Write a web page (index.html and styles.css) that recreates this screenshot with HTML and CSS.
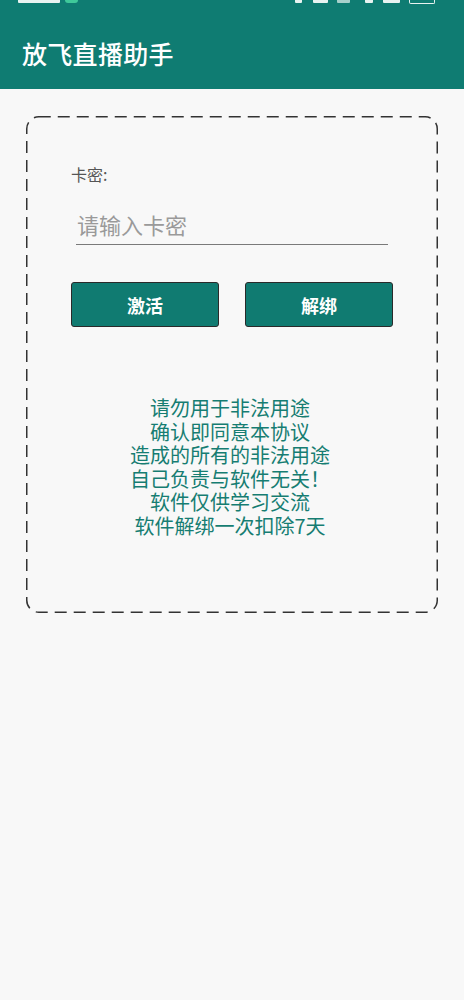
FILE: index.html
```html
<!DOCTYPE html>
<html lang="zh">
<head>
<meta charset="utf-8">
<title>放飞直播助手</title>
<link rel="stylesheet" href="styles.css">
</head>
<body>
<header class="appbar">
  <div class="status">
    <div class="status-left">
      <span class="sb sb-time"></span>
      <span class="sb sb-green"></span>
    </div>
    <div class="status-right">
      <span class="sb sb-a"></span>
      <span class="sb sb-b"></span>
      <span class="sb sb-c"></span>
      <span class="sb sb-d"></span>
      <span class="sb sb-e"></span>
      <span class="sb sb-batt"></span>
    </div>
  </div>
  <h1 class="title">放飞直播助手</h1>
</header>
<main class="page">
  <section class="card">
    <div class="label">卡密:</div>
    <div class="field"><span class="placeholder">请输入卡密</span></div>
    <div class="actions">
      <button class="btn">激活</button>
      <button class="btn">解绑</button>
    </div>
    <div class="notice">
      <p>请勿用于非法用途</p>
      <p>确认即同意本协议</p>
      <p>造成的所有的非法用途</p>
      <p>自己负责与软件无关！</p>
      <p>软件仅供学习交流</p>
      <p>软件解绑一次扣除7天</p>
    </div>
  </section>
</main>
</body>
</html>
```
FILE: styles.css
```css
* { box-sizing: border-box; }
html, body { margin: 0; padding: 0; }
body {
  background: #f8f8f8;
  font-family: "Noto Sans CJK SC", "Noto Sans", Roboto, sans-serif;
  width: 464px;
  min-height: 1000px;
}
.appbar {
  background: #0f7c72;
  height: 89px;
}
.status {
  height: 24px;
  display: flex;
  justify-content: space-between;
  align-items: flex-start;
  padding: 0 29px 0 18px;
}
.status-left, .status-right {
  display: flex;
  align-items: flex-start;
}
.sb {
  display: block;
  height: 3px;
  background: #e8f3f1;
  border-radius: 0 0 1px 1px;
}
.sb-time { width: 42px; }
.sb-green { width: 13px; background: #3fc99a; margin-left: 5px; border-radius: 0 0 3px 3px; }
.sb-a { width: 7px; }
.sb-b { width: 15px; margin-left: 11px; }
.sb-c { width: 13px; margin-left: 9px; opacity: .7; }
.sb-d { width: 8px; margin-left: 15px; }
.sb-e { width: 17px; margin-left: 10px; }
.sb-batt {
  width: 26px; margin-left: 9px; height: 4px;
  background: transparent;
  border: 1.5px solid #e8f3f1; border-top: none;
  border-radius: 0 0 2px 2px;
}
.title {
  margin: 14px 0 0 22px;
  font-size: 25px;
  line-height: 30px;
  font-weight: 500;
  color: #ffffff;
  letter-spacing: 0.3px;
}
.page {
  padding: 27px 26px 0;
}
.card {
  height: 497px;
  padding: 48px 45px 0;
  background-image: url("data:image/svg+xml,%3Csvg xmlns='http://www.w3.org/2000/svg' width='412' height='497'%3E%3Crect x='0.75' y='0.75' width='410.5' height='495.5' rx='12' ry='12' fill='none' stroke='%23333' stroke-width='1.5' stroke-dasharray='12 7'/%3E%3C/svg%3E");
  background-repeat: no-repeat;
  background-size: 100% 100%;
}
.label {
  font-size: 16px;
  line-height: 20px;
  color: #555;
}
.field {
  margin: 25px 5px 0;
  padding: 0 0 5px 1px;
  border-bottom: 1.5px solid #7a7a7a;
}
.placeholder {
  display: block;
  font-size: 22px;
  line-height: 30px;
  color: #9a9a9a;
}
.actions {
  margin-top: 37px;
  display: flex;
  gap: 26px;
}
.btn {
  flex: 1;
  height: 45px;
  background: #107b71;
  border: 1px solid #2a2a2a;
  border-radius: 3px;
  color: #fff;
  font-family: "Noto Sans CJK SC", "Noto Sans", sans-serif;
  font-size: 18px;
  font-weight: 700;
  padding: 0;
}
.notice {
  margin-top: 69px;
  padding-right: 4px;
  text-align: center;
  color: #167d72;
  font-size: 20px;
}
.notice p {
  margin: 0;
  height: 23.5px;
  line-height: 23.5px;
}
```
